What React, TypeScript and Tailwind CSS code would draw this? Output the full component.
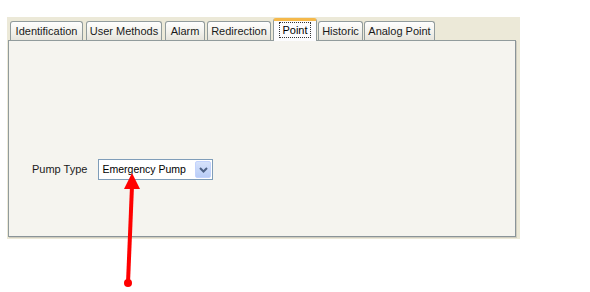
import React from "react";

const tabs = [
  { label: "Identification", w: "w-[73px]", ml: "ml-0" },
  { label: "User Methods", w: "w-[76px]", ml: "ml-[3px]" },
  { label: "Alarm", w: "w-[40px]", ml: "ml-[3px]" },
  { label: "Redirection", w: "w-[64px]", ml: "ml-[2px]" },
  { label: "Point", w: "w-[44px]", ml: "ml-[2px]", active: true },
  { label: "Historic", w: "w-[45px]", ml: "ml-[1px]" },
  { label: "Analog Point", w: "w-[71px]", ml: "ml-[1px]" },
];

function Tab({ label, w, ml, active }: { label: string; w: string; ml: string; active?: boolean }) {
  if (active) {
    return (
      <div
        className={`${w} ${ml} relative z-10 h-[23px] -mb-px flex items-start justify-center bg-[#fcfcfe] border border-b-0 border-[#919b9c] rounded-t-[3px] border-t-[3px] border-t-[#f5b84a]`}
      >
        <span className="mt-[1px] px-[2px] leading-[14px] border border-dotted border-[#333]">{label}</span>
      </div>
    );
  }
  return (
    <div
      className={`${w} ${ml} h-[19px] flex items-center justify-center bg-gradient-to-b from-[#fefefe] via-[#f4f3ee] to-[#e6e4dc] border border-b-0 border-[#919b9c] rounded-t-[3px] text-[#1a1a1a]`}
    >
      {label}
    </div>
  );
}

export default function App() {
  return (
    <div className="relative w-[590px] h-[292px] bg-white overflow-hidden text-[11px] font-['Liberation_Sans',Arial,sans-serif]">
      <div className="ml-[7px] mt-[17px] w-[513px] h-[222px] bg-[#ece9d8] pl-px">
        <div className="flex items-end h-[23px] pl-[2px]">
          {tabs.map((t) => (
            <Tab key={t.label} {...t} />
          ))}
        </div>
        <div className="w-[508px] h-[197px] bg-[#f5f4ef] border border-[#919b9c] border-r-[#8a9499] border-b-[#8a9499] shadow-[1px_1px_0_#d0cdc0] pl-[23px] pt-[118px]">
          <div className="flex items-center gap-[11px]">
            <span className="text-[#1a1a1a]">Pump Type</span>
            <div className="w-[115px] h-[21px] bg-white border border-[#7f9db9] flex items-center justify-between pl-[3px] pr-px">
              <span className="text-black text-[10.5px]">Emergency Pump</span>
              <div className="w-[16px] h-[17px] rounded-[2px] bg-gradient-to-b from-[#d6e2fb] to-[#b9cdf7] border border-[#c3d3fd] flex items-center justify-center">
                <svg width="9" height="6" viewBox="0 0 9 6">
                  <path d="M1 1 L4.5 4.5 L8 1" fill="none" stroke="#4d6185" strokeWidth="2" />
                </svg>
              </div>
            </div>
          </div>
        </div>
      </div>
      <svg className="absolute left-0 top-0 pointer-events-none" width="590" height="292">
        <line x1="132" y1="186" x2="128" y2="283" stroke="#ff0000" strokeWidth="4" />
        <circle cx="128" cy="283" r="4" fill="#ff0000" />
        <polygon points="132,173 140,189 124,189" fill="#ff0000" />
      </svg>
    </div>
  );
}
